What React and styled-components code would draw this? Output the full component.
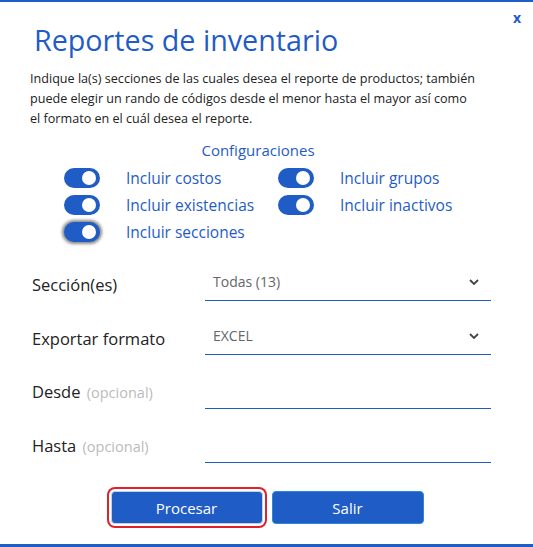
import * as React from "react"
import styled, { createGlobalStyle } from "styled-components"

const BLUE = "#1f5cc6"

const GlobalStyle = createGlobalStyle`
  html, body {
    margin: 0;
    padding: 0;
    background: #fff;
  }
  * {
    box-sizing: border-box;
  }
`

const options = [
  { label: "Incluir costos" },
  { label: "Incluir grupos" },
  { label: "Incluir existencias" },
  { label: "Incluir inactivos" },
  { label: "Incluir secciones", focused: true },
]

const Chevron = () => (
  <svg width="10" height="6" viewBox="0 0 10 6">
    <path d="M1 1l4 4 4-4" fill="none" stroke="#444" strokeWidth="1.8" />
  </svg>
)

const Toggle = ({ focused }) => (
  <ToggleTrack $focused={focused}>
    <ToggleKnob />
  </ToggleTrack>
)

export default function App() {
  return (
    <>
      <GlobalStyle />
      <Dialog>
        <CloseButton>x</CloseButton>
        <Title>Reportes de inventario</Title>
        <Intro>
          Indique la(s) secciones de las cuales desea el reporte de productos; también
          <br />
          puede elegir un rando de códigos desde el menor hasta el mayor así como
          <br />
          el formato en el cuál desea el reporte.
        </Intro>

        <SectionTitle>Configuraciones</SectionTitle>
        <OptionsGrid>
          {options.map((o) => (
            <OptionRow key={o.label}>
              <Toggle focused={o.focused} />
              <OptionLabel>{o.label}</OptionLabel>
            </OptionRow>
          ))}
        </OptionsGrid>

        <Form>
          <FieldRow>
            <FieldLabel>Sección(es)</FieldLabel>
            <Field>
              <FieldValue>Todas (13)</FieldValue>
              <Chevron />
            </Field>
          </FieldRow>
          <FieldRow>
            <FieldLabel>Exportar formato</FieldLabel>
            <Field>
              <FieldValue>EXCEL</FieldValue>
              <Chevron />
            </Field>
          </FieldRow>
          <FieldRow>
            <FieldLabel>
              Desde <Optional>(opcional)</Optional>
            </FieldLabel>
            <Field />
          </FieldRow>
          <FieldRow>
            <FieldLabel>
              Hasta <Optional>(opcional)</Optional>
            </FieldLabel>
            <Field />
          </FieldRow>
        </Form>

        <Actions>
          <Button $focused>Procesar</Button>
          <Button>Salir</Button>
        </Actions>
      </Dialog>
    </>
  )
}

const Dialog = styled.div`
  position: relative;
  width: 533px;
  height: 547px;
  border-top: 2px solid ${BLUE};
  border-bottom: 3px solid ${BLUE};
  font-family: "Open Sans", "Noto Sans", sans-serif;
  color: #222;
  display: flex;
  flex-direction: column;
`

const CloseButton = styled.div`
  position: absolute;
  top: 6px;
  right: 12px;
  font-size: 14px;
  font-weight: 700;
  color: ${BLUE};
`

const Title = styled.h1`
  margin: 19px 0 0 34px;
  font-size: 28.7px;
  font-weight: 400;
  line-height: 38px;
  color: ${BLUE};
`

const Intro = styled.p`
  margin: 10px 30px 0 30px;
  font-size: 12.6px;
  line-height: 20px;
  white-space: nowrap;
  color: #222;
`

const SectionTitle = styled.h2`
  margin: 11px 0 0;
  padding-right: 17px;
  text-align: center;
  font-size: 15px;
  font-weight: 500;
  line-height: 20px;
  color: ${BLUE};
`

const OptionsGrid = styled.div`
  display: grid;
  grid-template-columns: 214px 200px;
  row-gap: 5px;
  margin: 7px 0 0 64px;
`

const OptionRow = styled.div`
  display: flex;
  align-items: center;
  gap: 26px;
`

const ToggleTrack = styled.div`
  width: 36px;
  height: 20px;
  border-radius: 10px;
  background: ${BLUE};
  display: flex;
  align-items: center;
  justify-content: flex-end;
  padding-right: 4px;
  box-shadow: ${(p) => (p.$focused ? "0 0 3px 2px rgba(0,0,0,0.45)" : "none")};
`

const ToggleKnob = styled.div`
  width: 14px;
  height: 14px;
  border-radius: 50%;
  background: #fff;
`

const OptionLabel = styled.span`
  font-size: 15.5px;
  line-height: 22px;
  font-weight: 500;
  color: ${BLUE};
`

const Form = styled.div`
  display: flex;
  flex-direction: column;
  gap: 22px;
  margin: 26px 42px 0 32px;
`

const FieldRow = styled.div`
  display: grid;
  grid-template-columns: 173px 1fr;
  align-items: end;
`

const FieldLabel = styled.label`
  font-size: 16.5px;
  line-height: 24px;
  padding-bottom: 4px;
  color: #222;
`

const Optional = styled.span`
  margin-left: 2px;
  font-size: 14.5px;
  color: #bbb;
`

const Field = styled.div`
  height: 32px;
  display: flex;
  align-items: center;
  justify-content: space-between;
  padding: 0 12px 6px 8px;
  border-bottom: 1.5px solid ${BLUE};
`

const FieldValue = styled.span`
  font-size: 14px;
  color: #666;
`

const Actions = styled.div`
  display: flex;
  justify-content: center;
  gap: 9px;
  margin-top: 28px;
  padding-left: 1px;
`

const Button = styled.button`
  width: 152px;
  height: 33px;
  border: 1px solid ${(p) => (p.$focused ? "#c8d0dc" : "#2a8ad8")};
  border-radius: 4px;
  background: ${BLUE};
  color: #fff;
  font-family: inherit;
  font-size: 15px;
  box-shadow: ${(p) =>
    p.$focused ? "0 0 0 2px #fff, 0 0 0 4px #e0202a" : "none"};
`
